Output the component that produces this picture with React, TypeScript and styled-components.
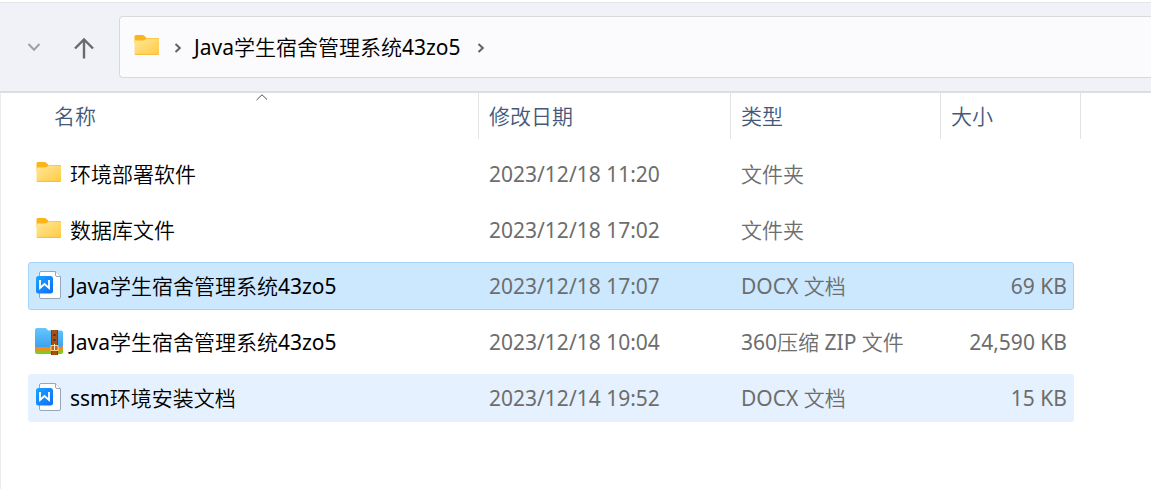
import React from "react";
import styled, { createGlobalStyle } from "styled-components";

const GlobalStyle = createGlobalStyle`
  * { box-sizing: border-box; }
  html, body { margin: 0; background: #ffffff; }
  body {
    font-family: "Noto Sans", "Noto Sans CJK SC", sans-serif;
    font-size: 21px;
    line-height: 28px;
    color: #000000;
    overflow-x: hidden;
  }
  button, th { font: inherit; }
`;

const Window = styled.main`
  min-height: 100vh;
  display: flex;
  flex-direction: column;
  border-top: 2px solid #ffffff;
`;

const Toolbar = styled.nav`
  display: flex;
  align-items: center;
  padding: 13px 0 13px 16px;
  background: #f1f2f7;
  border-top: 1px solid #e6e6e9;
  border-bottom: 2px solid #dcdce1;
`;

const NavButton = styled.button<{ $tint: string }>`
  display: flex;
  align-items: center;
  justify-content: center;
  width: 36px;
  height: 36px;
  margin-right: 14px;
  padding: 0;
  border: 0;
  background: transparent;
  color: ${(p) => p.$tint};
`;

const AddressBar = styled.div`
  flex: 1;
  display: flex;
  align-items: center;
  height: 62px;
  margin-left: 3px;
  padding-left: 12px;
  background: #fbfbfd;
  border: 1px solid #d8d8de;
  border-right: 0;
  border-radius: 4px 0 0 4px;
`;

const Separator = styled.span<{ $wide?: boolean }>`
  display: flex;
  justify-content: center;
  width: ${(p) => (p.$wide ? "40px" : "32px")};
  padding-top: 2px;
  color: #626262;
`;

const Crumb = styled.a`
  color: #000000;
  font-weight: 350;
  text-decoration: none;
  white-space: nowrap;
`;

const FileTable = styled.table`
  flex: 1;
  display: block;
  padding-left: 27px;
  border-left: 1px solid #ececef;
`;

const TableHead = styled.thead`
  display: block;
`;

const TableBody = styled.tbody`
  display: flex;
  flex-direction: column;
  gap: 8px;
  padding-top: 11px;
`;

const HeaderRow = styled.tr`
  display: grid;
  grid-template-columns: 451px 252px 210px 140px;
`;

const HeaderCell = styled.th<{ $inset?: boolean }>`
  position: relative;
  height: 46px;
  padding: 9px 0 9px ${(p) => (p.$inset ? "26px" : "10px")};
  border-right: 1px solid #e3e3e3;
  color: #44597a;
  font-weight: 350;
  text-align: left;
`;

const SortMark = styled.svg`
  position: absolute;
  top: 0;
  left: 50%;
`;

type RowState = "plain" | "selected" | "hovered";

const rowFill: Record<RowState, string> = {
  plain: "transparent",
  selected: "#cce8ff",
  hovered: "#e5f1fe",
};

const FileRow = styled.tr<{ $state: RowState }>`
  display: grid;
  grid-template-columns: 450px 252px 210px 132px;
  align-items: center;
  width: 1046px;
  height: 48px;
  border: 1px solid ${(p) => (p.$state === "selected" ? "#a3d3fb" : "transparent")};
  border-radius: 3px;
  background: ${(p) => rowFill[p.$state]};
`;

const NameCell = styled.td`
  display: flex;
  align-items: center;
  gap: 6px;
  padding: 0 0 0 5px;
  font-weight: 350;
  white-space: nowrap;
`;

const InfoCell = styled.td`
  padding: 0 0 0 10px;
  color: #6d6d6d;
  font-weight: 350;
  white-space: nowrap;
`;

const SizeCell = styled(InfoCell)`
  padding: 0 6px 0 0;
  text-align: right;
`;

const Latin = styled.span`
  font-weight: 400;
`;

const IconBox = styled.span`
  display: flex;
  width: 30px;
  height: 32px;
`;

/* Runs of Latin letters and digits carry more weight than the Han text. */
const Mixed = ({ text }: { text: string }) => (
  <span>
    {text.split(/([\x20-\x7e]+)/).map((part, i) =>
      i % 2 ? <Latin key={i}>{part}</Latin> : part
    )}
  </span>
);

const FolderIcon = ({ id }: { id: string }) => (
  <svg width="30" height="32" viewBox="0 0 30 32" aria-hidden="true">
    <defs>
      <linearGradient id={id} x1="0" y1="0" x2="1" y2="1">
        <stop offset="0" stopColor="#ffe79c" />
        <stop offset="1" stopColor="#ffcb40" />
      </linearGradient>
    </defs>
    <path d="M2.500 5.500q0-1.500 1.500-1.500h6.500q1 0 2 1l2 2h11.500q1 0 1 1v5H2.500z" fill="#fbb518" />
    <path d="M2.500 9.500h8q2 0 3-1l1-1h11.500q1 0 1 1v14q0 1.500-1.500 1.500h-21.500Q2.500 24 2.500 22.500z" fill={`url(#${id})`} />
    <path d="M3 23.400h23.500" stroke="#f5bc42" strokeWidth="1" />
  </svg>
);

const WriterIcon = ({ id }: { id: string }) => (
  <svg width="30" height="32" viewBox="0 0 30 32" aria-hidden="true">
    <defs>
      <linearGradient id={id} x1="0" y1="0" x2="1" y2="1">
        <stop offset="0" stopColor="#17a5ff" />
        <stop offset="1" stopColor="#126df8" />
      </linearGradient>
    </defs>
    <path d="M7 1.500h14.500l5 5v20.500q0 1.500-1.500 1.500h-18q-1.500 0-1.500-1.500v-24q0-1.500 1.500-1.500z" fill="#fff" stroke="#98a6b9" />
    <path d="M21.500 1.500v3.500q0 1.500 1.500 1.500h3.500" fill="#fff" stroke="#98a6b9" />
    <rect x="2" y="6" width="17" height="17.500" rx="2.500" fill={`url(#${id})`} />
    <path d="M6 10v8l4.500-4 4.500 4v-8" fill="none" stroke="#fff" strokeWidth="1.800" />
  </svg>
);

const ZipIcon = () => (
  <svg width="30" height="32" viewBox="0 0 30 32" aria-hidden="true">
    <defs>
      <linearGradient id="zip-blue" x1="0" y1="0" x2="0" y2="1">
        <stop offset="0" stopColor="#65c6ff" />
        <stop offset="1" stopColor="#3ba3ee" />
      </linearGradient>
    </defs>
    <path d="M1 21h28v5q0 2-2 2H3q-2 0-2-2z" fill="#83c91f" />
    <path d="M1 18h28v4q0 2.500-2 2.500H3q-2 0-2-2z" fill="#ff8617" />
    <path d="M1 4q0-2 2-2h8q1 0 2 1l1 1.500h13q2 0 2 2V19q0 2-2 2H3q-2 0-2-2z" fill="url(#zip-blue)" />
    <rect x="17" y="4" width="7" height="25" fill="#a35019" />
    <path d="M17.500 4v25M23.500 4v25" stroke="#813b0d" />
    <path d="M20.500 8v2m0 3v2" stroke="#63270a" strokeWidth="2" />
    <rect x="17" y="19.500" width="7" height="5" fill="#b8642b" stroke="#ffd080" />
    <path d="M20.500 18v6" stroke="#fff0c0" />
  </svg>
);

const Chevron = () => (
  <svg width="8" height="12" viewBox="0 0 8 12" aria-hidden="true">
    <path d="M1.500 2L5.800 6 1.500 10" fill="none" stroke="currentColor" strokeWidth="2" />
  </svg>
);

type Kind = "folder" | "writer" | "zip";

interface Entry {
  name: string;
  kind: Kind;
  date: string;
  type: string;
  size: string;
  state: RowState;
}

const entries: Entry[] = [
  { name: "环境部署软件", kind: "folder", date: "2023/12/18 11:20", type: "文件夹", size: "", state: "plain" },
  { name: "数据库文件", kind: "folder", date: "2023/12/18 17:02", type: "文件夹", size: "", state: "plain" },
  { name: "Java学生宿舍管理系统43zo5", kind: "writer", date: "2023/12/18 17:07", type: "DOCX 文档", size: "69 KB", state: "selected" },
  { name: "Java学生宿舍管理系统43zo5", kind: "zip", date: "2023/12/18 10:04", type: "360压缩 ZIP 文件", size: "24,590 KB", state: "plain" },
  { name: "ssm环境安装文档", kind: "writer", date: "2023/12/14 19:52", type: "DOCX 文档", size: "15 KB", state: "hovered" },
];

const FileIcon = ({ kind, id }: { kind: Kind; id: string }) => {
  if (kind === "folder") return <FolderIcon id={id} />;
  if (kind === "writer") return <WriterIcon id={id} />;
  return <ZipIcon />;
};

export default function App() {
  return (
    <Window>
      <GlobalStyle />
      <Toolbar>
        <NavButton $tint="#a0a0a4" aria-label="最近浏览的位置">
          <svg width="14" height="10" viewBox="0 0 14 10" aria-hidden="true">
            <path d="M1.500 2L7 7.800 12.500 2" fill="none" stroke="currentColor" strokeWidth="2" />
          </svg>
        </NavButton>
        <NavButton $tint="#6a6a6d" aria-label="上移">
          <svg width="22" height="24" viewBox="0 0 22 24" aria-hidden="true">
            <path d="M11 23.500V4.500M2 13.500l9-9 9 9" fill="none" stroke="currentColor" strokeWidth="2.400" />
          </svg>
        </NavButton>
        <AddressBar>
          <FolderIcon id="folder-address" />
          <Separator><Chevron /></Separator>
          <Crumb href="#"><Mixed text="Java学生宿舍管理系统43zo5" /></Crumb>
          <Separator $wide><Chevron /></Separator>
        </AddressBar>
      </Toolbar>
      <FileTable>
        <TableHead>
          <HeaderRow>
            <HeaderCell $inset>
              名称
              <SortMark width="14" height="9" viewBox="0 0 14 9" aria-hidden="true">
                <path d="M3.500 7L9 1.800 14.500 7" fill="none" stroke="#555" overflow="visible" />
              </SortMark>
            </HeaderCell>
            <HeaderCell>修改日期</HeaderCell>
            <HeaderCell>类型</HeaderCell>
            <HeaderCell>大小</HeaderCell>
          </HeaderRow>
        </TableHead>
        <TableBody>
          {entries.map((entry, i) => (
            <FileRow key={i} $state={entry.state}>
              <NameCell>
                <IconBox><FileIcon kind={entry.kind} id={`file-${i}`} /></IconBox>
                <Mixed text={entry.name} />
              </NameCell>
              <InfoCell><Mixed text={entry.date} /></InfoCell>
              <InfoCell><Mixed text={entry.type} /></InfoCell>
              <SizeCell><Mixed text={entry.size} /></SizeCell>
            </FileRow>
          ))}
        </TableBody>
      </FileTable>
    </Window>
  );
}
